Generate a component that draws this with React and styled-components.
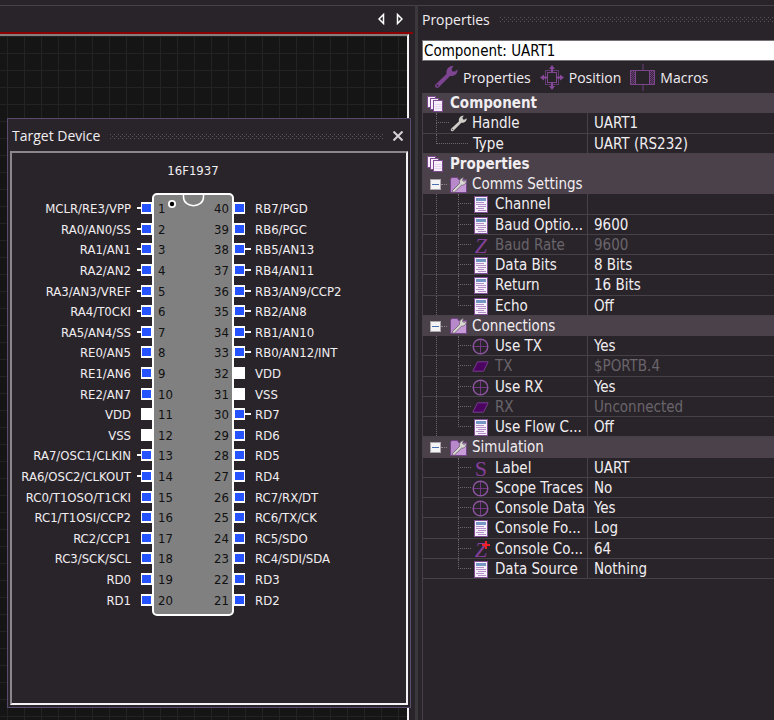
import React, { useState } from "react";
import styled, { createGlobalStyle, css } from "styled-components";

const leftPins = [
  { label: "MCLR/RE3/VPP", stub: true },
  { label: "RA0/AN0/SS", stub: true },
  { label: "RA1/AN1", stub: true },
  { label: "RA2/AN2", stub: true },
  { label: "RA3/AN3/VREF", stub: true },
  { label: "RA4/T0CKI", stub: true },
  { label: "RA5/AN4/SS", stub: true },
  { label: "RE0/AN5" },
  { label: "RE1/AN6" },
  { label: "RE2/AN7" },
  { label: "VDD", power: true },
  { label: "VSS", power: true },
  { label: "RA7/OSC1/CLKIN", stub: true },
  { label: "RA6/OSC2/CLKOUT", stub: true },
  { label: "RC0/T1OSO/T1CKI" },
  { label: "RC1/T1OSI/CCP2" },
  { label: "RC2/CCP1" },
  { label: "RC3/SCK/SCL" },
  { label: "RD0" },
  { label: "RD1" },
];

const rightPins = [
  { label: "RB7/PGD" },
  { label: "RB6/PGC" },
  { label: "RB5/AN13", stub: true },
  { label: "RB4/AN11", stub: true },
  { label: "RB3/AN9/CCP2", stub: true },
  { label: "RB2/AN8", stub: true },
  { label: "RB1/AN10", stub: true },
  { label: "RB0/AN12/INT", stub: true },
  { label: "VDD", power: true },
  { label: "VSS", power: true },
  { label: "RD7", stub: true },
  { label: "RD6" },
  { label: "RD5" },
  { label: "RD4" },
  { label: "RC7/RX/DT" },
  { label: "RC6/TX/CK" },
  { label: "RC5/SDO" },
  { label: "RC4/SDI/SDA" },
  { label: "RD3" },
  { label: "RD2" },
];

const groups = [
  {
    name: "Comms Settings",
    items: [
      { icon: "list", name: "Channel", value: "" },
      { icon: "list", name: "Baud Optio...", value: "9600" },
      { icon: "z", name: "Baud Rate", value: "9600", disabled: true },
      { icon: "list", name: "Data Bits", value: "8 Bits" },
      { icon: "list", name: "Return", value: "16 Bits" },
      { icon: "list", name: "Echo", value: "Off" },
    ],
  },
  {
    name: "Connections",
    items: [
      { icon: "target", name: "Use TX", value: "Yes" },
      { icon: "pin", name: "TX", value: "$PORTB.4", disabled: true },
      { icon: "target", name: "Use RX", value: "Yes" },
      { icon: "pin", name: "RX", value: "Unconnected", disabled: true },
      { icon: "list", name: "Use Flow C...", value: "Off" },
    ],
  },
  {
    name: "Simulation",
    items: [
      { icon: "s", name: "Label", value: "UART" },
      { icon: "target", name: "Scope Traces", value: "No" },
      { icon: "target", name: "Console Data", value: "Yes" },
      { icon: "list", name: "Console Fo...", value: "Log" },
      { icon: "zplus", name: "Console Co...", value: "64" },
      { icon: "list", name: "Data Source", value: "Nothing" },
    ],
  },
];

function WrenchIcon({ size, color, edge }) {
  return (
    <svg width={size} height={size} viewBox="0 0 24 24">
      <path
        d="M1.5 19.5 L12.5 9 C12 5.500 13.500 2 17.500 1 L19.500 1 L17.500 4 L18.500 6.500 L21 6.500 L23.500 4.500 C24 8.500 20.500 11.500 16 11 L4.500 22.500 C2.500 24 0 21.500 1.500 19.500 Z"
        fill={color}
      />
      <circle cx="3.500" cy="20.500" r="1" fill={edge} />
    </svg>
  );
}

function PositionIcon() {
  return (
    <svg width="24" height="25" viewBox="0 0 24 25">
      <rect x="5.500" y="5.500" width="13" height="14" fill="none" stroke="#653973" />
      <rect x="7.500" y="7.500" width="9" height="10" fill="#29242a" stroke="#7d478b" />
      <path d="M12 0 L15 4 H9 Z M12 25 L15 21 H9 Z M0 12.500 L4 9.500 V15.500 Z M24 12.500 L20 9.500 V15.500 Z" fill="#87499a" />
      <path d="M12 4 V7 M12 18 V21 M4 12.500 H7 M17 12.500 H20" stroke="#87499a" strokeWidth="2" />
    </svg>
  );
}

function MacrosIcon() {
  return (
    <svg width="25" height="27" viewBox="0 0 25 27">
      <defs>
        <pattern id="hatch" width="2" height="2" patternUnits="userSpaceOnUse">
          <rect width="2" height="2" fill="#3a2641" />
          <rect width="1" height="1" fill="#683d74" />
          <rect x="1" y="1" width="1" height="1" fill="#683d74" />
        </pattern>
      </defs>
      <path d="M13 0 V6 M13 21 V27" stroke="#4a3053" strokeWidth="2" />
      <rect x="0" y="6" width="25" height="15" fill="url(#hatch)" />
      <rect x="5" y="7" width="14" height="13" fill="#29242a" />
      <path d="M0.500 6.500 H24.500 V20.500 H0.500 Z M5.500 6.500 V20.500 M19.500 6.500 V20.500" fill="none" stroke="#7d478b" />
    </svg>
  );
}

function PagesIcon() {
  return (
    <svg width="17" height="16" viewBox="0 0 17 16">
      <g fill="#f7effb" stroke="#7e4a91">
        <rect x="0.500" y="0.500" width="8" height="11" />
        <rect x="3.500" y="2.500" width="8" height="11" />
        <rect x="6.500" y="4.500" width="9" height="11" />
      </g>
      <path d="M8 8.500 H15 M8 10.500 H15 M8 12.500 H15" stroke="#e6d5ef" />
    </svg>
  );
}

function FolderIcon() {
  return (
    <svg width="17" height="16" viewBox="0 0 17 16">
      <path d="M0.500 2.500 V15.500 H16.500 V2.500 H8.500 L7.500 0.500 H1.500 Z" fill="#b789cb" stroke="#744286" />
      <path d="M4 15 L16 4 V15 Z" fill="#c79bd8" />
      <path d="M2 14 L9.500 6.500 C9 3.500 10.500 1 13.500 0.500 L12.500 3.500 L14 4.500 L16.500 3 C16.500 6.500 14 8.500 11.500 8.200 L4 15.500 Z" fill="#d9d8d2" stroke="#5d5360" strokeWidth="0.700" />
    </svg>
  );
}

function ListIcon() {
  return (
    <svg width="14" height="17" viewBox="0 0 14 17">
      <rect x="0.500" y="0.500" width="13" height="16" fill="#f6f0fa" stroke="#7f4d93" />
      <rect x="2" y="2" width="10" height="3" fill="#7596c4" />
      <path d="M2 6.500 H10 M2 8.500 H12 M4 10.500 H12 M2 12.500 H10 M4 14.500 H12" stroke="#b48ec8" />
    </svg>
  );
}

function TargetIcon() {
  return (
    <svg width="17" height="17" viewBox="0 0 17 17">
      <path d="M8.500 1 V16 M1 8.500 H16" stroke="#713785" />
      <circle cx="8.500" cy="8.500" r="7.300" fill="none" stroke="#8c55a0" strokeWidth="1.400" />
    </svg>
  );
}

function PinIcon() {
  return (
    <svg width="17" height="11" viewBox="0 0 17 11">
      <path d="M5.500 0.800 H16.200 L11.500 10.200 H0.800 Z" fill="#4c0461" stroke="#763f8c" />
    </svg>
  );
}

function PlusBadge() {
  return (
    <Badge width="8" height="8" viewBox="0 0 8 8">
      <path d="M4 0 V8 M0 4 H8" stroke="#f0202a" strokeWidth="2" />
    </Badge>
  );
}

function PropertyIcon({ type }) {
  switch (type) {
    case "target":
      return <TargetIcon />;
    case "pin":
      return <PinIcon />;
    case "s":
      return <Letter>S</Letter>;
    case "z":
      return <Letter $italic>Z</Letter>;
    case "zplus":
      return (
        <Letter $italic>
          Z
          <PlusBadge />
        </Letter>
      );
    default:
      return <ListIcon />;
  }
}

function DevicePins({ pins, side }) {
  return (
    <PinList $side={side}>
      {pins.map((pin, i) => (
        <Pin key={i} $side={side}>
          <PinLabel>{pin.label}</PinLabel>
          <Stub $side={side} $visible={pin.stub} />
          <Pad $power={pin.power} />
        </Pin>
      ))}
    </PinList>
  );
}

function TargetDevice({ onClose }) {
  return (
    <FloatingPanel>
      <PanelHeader>
        <Title>Target Device</Title>
        <Grip />
        <CloseButton aria-label="Close" onClick={onClose}>
          <svg width="10" height="10" viewBox="0 0 10 10">
            <path d="M0.500 0.500 L9.500 9.500 M9.500 0.500 L0.500 9.500" stroke="#d6d3d6" strokeWidth="2" />
          </svg>
        </CloseButton>
      </PanelHeader>
      <DeviceView>
        <DeviceName>16F1937</DeviceName>
        <Chip>
          <DevicePins pins={leftPins} side="left" />
          <ChipBody>
            <ChipMarks width="78" height="14" viewBox="0 0 78 14">
              <circle cx="18" cy="9" r="4" fill="#fff" />
              <circle cx="18" cy="9" r="2.200" fill="#000" />
              <path d="M29.500 0 V2 C29.500 13.500 49.500 13.500 49.500 2 V0" fill="none" stroke="#fff" strokeWidth="1.500" />
            </ChipMarks>
            <Numbers>
              {leftPins.map((pin, i) => (
                <span key={i}>{i + 1}</span>
              ))}
            </Numbers>
            <Numbers $end>
              {rightPins.map((pin, i) => (
                <span key={i}>{40 - i}</span>
              ))}
            </Numbers>
          </ChipBody>
          <DevicePins pins={rightPins} side="right" />
        </Chip>
      </DeviceView>
    </FloatingPanel>
  );
}

function PropertyRow({ item, rail, last }) {
  return (
    <tr>
      <NameCell>
        <Name $disabled={item.disabled}>
          <Rail $visible={rail} />
          <Branch $last={last} />
          <IconSlot>
            <PropertyIcon type={item.icon} />
          </IconSlot>
          {item.name}
        </Name>
      </NameCell>
      <ValueCell $disabled={item.disabled}>{item.value}</ValueCell>
    </tr>
  );
}

function Group({ group, last }) {
  const [open, setOpen] = useState(true);

  return (
    <>
      <tr>
        <GroupCell colSpan={2}>
          <Name>
            <Expander aria-label={group.name} aria-expanded={open} onClick={() => setOpen(!open)} />
            <Dash />
            <FolderIcon />
            <GroupText>{group.name}</GroupText>
          </Name>
        </GroupCell>
      </tr>
      {open &&
        group.items.map((item, i) => (
          <PropertyRow key={item.name} item={item} rail={!last} last={i === group.items.length - 1} />
        ))}
    </>
  );
}

function Section({ children }) {
  return (
    <tr>
      <GroupCell colSpan={2}>
        <SectionName>
          <PagesIcon />
          {children}
        </SectionName>
      </GroupCell>
    </tr>
  );
}

function App() {
  const [showDevice, setShowDevice] = useState(true);

  return (
    <>
      <GlobalStyle />
      <Page>
        <Workspace>
          <TabBar>
            <ArrowButton aria-label="Previous">
              <svg width="7" height="12" viewBox="0 0 7 12">
                <path d="M5.500 1.500 V10.500 L1 6 Z" fill="none" stroke="#fff" strokeWidth="1.500" />
              </svg>
            </ArrowButton>
            <ArrowButton aria-label="Next">
              <svg width="7" height="12" viewBox="0 0 7 12">
                <path d="M1.500 1.500 V10.500 L6 6 Z" fill="none" stroke="#fff" strokeWidth="1.500" />
              </svg>
            </ArrowButton>
          </TabBar>
          <Canvas>{showDevice && <TargetDevice onClose={() => setShowDevice(false)} />}</Canvas>
        </Workspace>
        <Sidebar>
          <SidebarHeader>
            <Title>Properties</Title>
            <Grip />
          </SidebarHeader>
          <ComponentInput aria-label="Component" defaultValue="Component: UART1" />
          <Toolbar>
            <ToolButton>
              <WrenchIcon size={24} color="#7d4591" edge="#29242a" />
              Properties
            </ToolButton>
            <ToolButton>
              <PositionIcon />
              Position
            </ToolButton>
            <ToolButton>
              <MacrosIcon />
              Macros
            </ToolButton>
          </Toolbar>
          <TableArea>
            <PropertyTable>
              <colgroup>
                <NameColumn />
                <col />
              </colgroup>
              <tbody>
                <Section>Component</Section>
                <tr>
                  <NameCell>
                    <Name>
                      <Inset />
                      <Branch />
                      <WrenchIcon size={17} color="#d0cec8" edge="#55515a" />
                      <GroupText>Handle</GroupText>
                    </Name>
                  </NameCell>
                  <ValueCell>UART1</ValueCell>
                </tr>
                <tr>
                  <NameCell>
                    <Name>
                      <Inset />
                      <Branch $last $wide />
                      <GroupText>Type</GroupText>
                    </Name>
                  </NameCell>
                  <ValueCell>UART (RS232)</ValueCell>
                </tr>
                <Section>Properties</Section>
                {groups.map((group, i) => (
                  <Group key={group.name} group={group} last={i === groups.length - 1} />
                ))}
              </tbody>
            </PropertyTable>
          </TableArea>
        </Sidebar>
      </Page>
    </>
  );
}

export default App;

const GlobalStyle = createGlobalStyle`
  * {
    box-sizing: border-box;
  }

  body {
    margin: 0;
    background: #29242a;
    color: #f1eef1;
    font-family: "Open Sans", sans-serif;
    font-size: 14px;
  }

  button {
    padding: 0;
    border: 0;
    background: none;
    color: inherit;
    font: inherit;
  }

  svg {
    display: block;
    flex: none;
  }
`;

const tahoma = css`
  font-family: "DejaVu Sans Condensed", "DejaVu Sans", sans-serif;
`;

const Page = styled.div`
  display: flex;
  min-height: 100vh;
  padding-top: 5px;
`;

const Workspace = styled.main`
  display: flex;
  flex: 1;
  flex-direction: column;
  min-width: 0;
  padding-right: 2px;
  border-top: 1px solid #454146;
`;

const TabBar = styled.div`
  display: flex;
  align-items: center;
  justify-content: flex-end;
  gap: 11px;
  height: 28px;
  padding-right: 10px;
  border-bottom: 2px solid #8b0000;
`;

const ArrowButton = styled.button`
  width: 7px;
`;

const Canvas = styled.div`
  position: relative;
  flex: 1;
  margin-right: 4px;
  border-top: 2px solid #85807d;
  border-right: 2px solid #f4f2f4;
  background-color: #151515;
  background-image: linear-gradient(#232323 1px, transparent 1px),
    linear-gradient(90deg, #232323 1px, transparent 1px);
  background-size: 17px 17px;
  background-position: 7px 0;
`;

const FloatingPanel = styled.section`
  position: absolute;
  top: 82px;
  bottom: 12px;
  left: 7px;
  display: flex;
  flex-direction: column;
  width: 404px;
  padding: 0 2px 2px;
  border: 1px solid #584b6e;
  background: #29242a;
  z-index: 1;
`;

const PanelHeader = styled.header`
  display: flex;
  align-items: center;
  gap: 10px;
  height: 32px;
  padding: 2px 5px 0 2px;
`;

const Title = styled.h2`
  margin: 0;
  font-size: 14px;
  font-weight: 400;
  line-height: 20px;
`;

const Grip = styled.div`
  flex: 1;
  height: 5px;
  background:
    linear-gradient(90deg, #5a555b 1px, transparent 1px) 0 0 / 4px 1px repeat-x,
    linear-gradient(90deg, #5a555b 1px, transparent 1px) 2px 2px / 4px 1px repeat-x,
    linear-gradient(90deg, #5a555b 1px, transparent 1px) 0 4px / 4px 1px repeat-x;
`;

const CloseButton = styled.button`
  width: 10px;
  height: 10px;
`;

const DeviceView = styled.div`
  flex: 1;
  border: 2px solid #f4f2f4;
  border-top-color: #8b868b;
  border-left-color: #8b868b;
  ${tahoma}
  font-size: 13px;
`;

const DeviceName = styled.h3`
  width: 362px;
  margin: 0;
  padding: 10px 0 14px;
  font-size: 13px;
  font-weight: 400;
  line-height: 16px;
  text-align: center;
`;

const Chip = styled.div`
  display: flex;
  height: 423px;
`;

const PinList = styled.ul`
  display: grid;
  grid-template-rows: repeat(20, 1fr);
  width: ${(props) => (props.$side === "left" ? "140px" : "auto")};
  margin: 0;
  padding: 5px 0 6px;
  list-style: none;
`;

const Pin = styled.li`
  display: flex;
  align-items: center;
  flex-direction: ${(props) => (props.$side === "left" ? "row" : "row-reverse")};
  justify-content: flex-end;
`;

const PinLabel = styled.span`
  padding-top: 2px;
  line-height: 16px;
`;

const Stub = styled.i`
  width: ${(props) => (props.$side === "left" ? "4px" : "6px")};
  height: 2px;
  margin: ${(props) => (props.$side === "left" ? "0 0 0 6px" : "0 4px 0 0")};
  background: ${(props) => (props.$visible ? "#fff" : "transparent")};
`;

const Pad = styled.i`
  width: 11px;
  height: 12px;
  border: 1px solid #fff;
  border-width: 2px 1px;
  background: ${(props) => (props.$power ? "#fff" : "#2453ff")};
`;

const ChipBody = styled.div`
  position: relative;
  display: flex;
  justify-content: space-between;
  width: 82px;
  padding: 4px 3px 3px 4px;
  border: 2px solid #fff;
  border-radius: 5px;
  background: #808080;
`;

const ChipMarks = styled.svg`
  position: absolute;
  top: 0;
  left: 0;
`;

const Numbers = styled.div`
  display: grid;
  grid-template-rows: repeat(20, 1fr);
  align-items: center;
  color: #111;
  line-height: 16px;
  text-align: ${(props) => (props.$end ? "right" : "left")};
`;

const Sidebar = styled.aside`
  display: flex;
  flex: 0 0 46%;
  flex-direction: column;
  box-sizing: content-box;
  border-top: 1px solid #454146;
  border-left: 3px solid #3b383c;
`;

const SidebarHeader = styled.header`
  display: flex;
  align-items: center;
  gap: 10px;
  height: 34px;
  padding: 0 0 7px 4px;
`;

const ComponentInput = styled.input`
  height: 21px;
  margin-left: 4px;
  padding: 1px 1px 0;
  border: 1px solid #777277;
  border-right: 0;
  background: #fff;
  color: #000;
  ${tahoma}
  font-size: 15px;
`;

const Toolbar = styled.div`
  display: flex;
  align-items: center;
  gap: 9px;
  height: 32px;
  padding-left: 16px;
`;

const ToolButton = styled.button`
  display: flex;
  align-items: center;
  gap: 5px;
`;

const TableArea = styled.div`
  flex: 1;
  margin-left: 4px;
  border-left: 1px solid #454146;
`;

const PropertyTable = styled.table`
  width: 100%;
  height: 486px;
  border-spacing: 0;
  table-layout: fixed;
  ${tahoma}
  font-size: 15px;
  line-height: 17px;
`;

const NameColumn = styled.col`
  width: 164px;
`;

const cell = css`
  padding: 0;
  border-bottom: 1px solid #454146;
  white-space: nowrap;
`;

const NameCell = styled.td`
  ${cell}
`;

const ValueCell = styled.td`
  ${cell}
  padding: 2px 0 0 6px;
  border-left: 1px solid #454146;
  color: ${(props) => (props.$disabled ? "#69656a" : "inherit")};
`;

const GroupCell = styled.td`
  ${cell}
  border-color: #4b414b;
  background: #4b414b;
`;

const Name = styled.div`
  display: flex;
  align-items: center;
  height: 19px;
  padding-top: 2px;
  color: ${(props) => (props.$disabled ? "#69656a" : "inherit")};

  > * {
    flex-shrink: 0;
  }
`;

const SectionName = styled(Name)`
  gap: 6px;
  padding-left: 4px;
  font-weight: 700;
`;

const GroupText = styled.span`
  margin-left: 5px;
`;

const Inset = styled.i`
  width: 13px;
`;

const Rail = styled.i`
  align-self: stretch;
  width: 22px;
  margin: -2px 0 0 13px;
  border-left: 1px dotted ${(props) => (props.$visible ? "#6b666c" : "transparent")};
`;

const Branch = styled.i`
  display: flex;
  flex-direction: column;
  align-self: stretch;
  width: ${(props) => (props.$wide ? "32px" : "13px")};
  margin: -2px ${(props) => (props.$wide ? "0" : "1px")} 0 0;

  &::before,
  &::after {
    content: "";
    flex: 1;
    border-left: 1px dotted #6b666c;
  }

  &::before {
    border-bottom: 1px dotted #6b666c;
  }

  &::after {
    border-left-color: ${(props) => (props.$last ? "transparent" : "#6b666c")};
  }
`;

const IconSlot = styled.span`
  display: flex;
  align-items: center;
  justify-content: center;
  width: 18px;
  height: 17px;
  margin-right: 5px;
`;

const Letter = styled.span`
  position: relative;
  color: #843f9a;
  font-family: "Liberation Serif", serif;
  font-size: 22px;
  font-style: ${(props) => (props.$italic ? "italic" : "normal")};
  line-height: 17px;
`;

const Badge = styled.svg`
  position: absolute;
  top: 0;
  right: -3px;
`;

const Expander = styled.button`
  width: 11px;
  height: 11px;
  margin-left: 7px;
  border: 1px solid #aaa6aa;
  background: linear-gradient(#4a6fb5, #4a6fb5) center / 7px 1px no-repeat, #f4f3f4;
`;

const Dash = styled.i`
  width: 6px;
  margin-right: 3px;
  border-bottom: 1px dotted #8a858b;
`;
